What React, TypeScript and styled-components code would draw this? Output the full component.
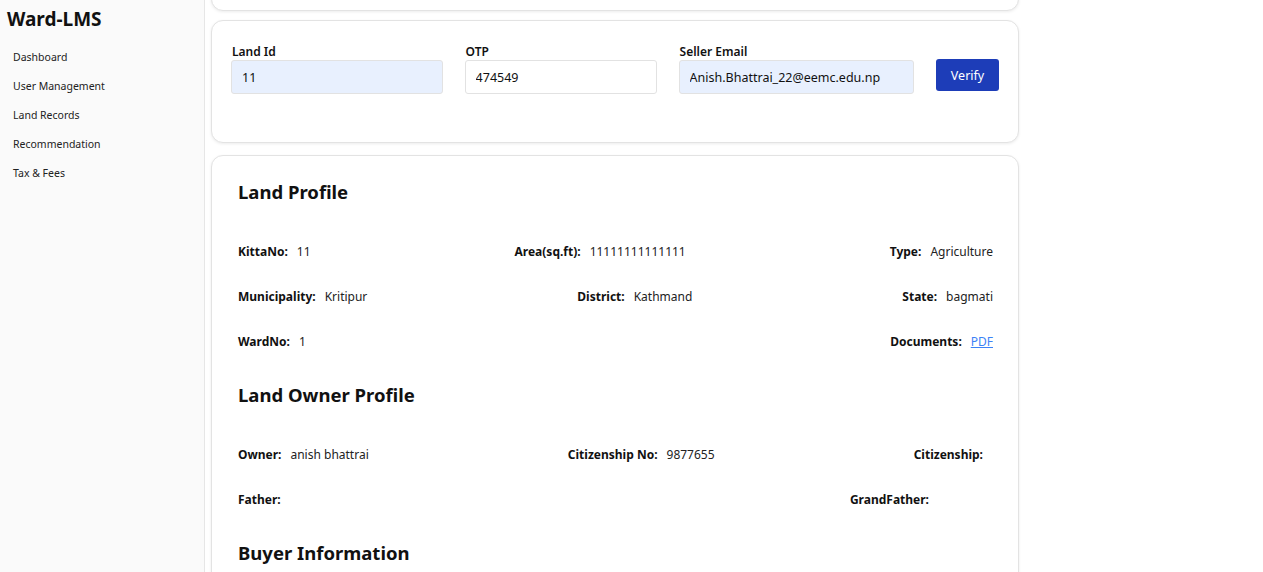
import styled, { createGlobalStyle } from "styled-components"

const GlobalStyle = createGlobalStyle`
  * { box-sizing: border-box; }
  html, body { margin: 0; padding: 0; background: #fff; }
  body {
    font-family: "Noto Sans", "Open Sans", sans-serif;
    color: #111;
    overflow: hidden;
  }
`

type Field = { label: string; value?: string; link?: boolean; pad?: number }

const landRows: Field[][] = [
  [
    { label: "KittaNo:", value: "11" },
    { label: "Area(sq.ft):", value: "11111111111111" },
    { label: "Type:", value: "Agriculture" },
  ],
  [
    { label: "Municipality:", value: "Kritipur" },
    { label: "District:", value: "Kathmand" },
    { label: "State:", value: "bagmati" },
  ],
  [
    { label: "WardNo:", value: "1" },
    { label: "Documents:", value: "PDF", link: true },
  ],
]

const ownerRows: Field[][] = [
  [
    { label: "Owner:", value: "anish bhattrai" },
    { label: "Citizenship No:", value: "9877655" },
    { label: "Citizenship:", pad: 10 },
  ],
  [
    { label: "Father:", pad: 10 },
    { label: "GrandFather:", pad: 64 },
  ],
]

export default function App() {
  return (
    <>
      <GlobalStyle />
      <Layout>
        <Sidebar>
          <Brand>Ward-LMS</Brand>
          <Nav>
            <NavItem>Dashboard</NavItem>
            <NavItem>User Management</NavItem>
            <NavItem>Land Records</NavItem>
            <NavItem>Recommendation</NavItem>
            <NavItem>Tax &amp; Fees</NavItem>
          </Nav>
        </Sidebar>

        <Main>
          <TopCard />

          <VerifyCard>
            <FormRow>
              <FormField $width={212}>
                <FieldLabel>Land Id</FieldLabel>
                <Input $autofill defaultValue="11" />
              </FormField>
              <FormField $width={192}>
                <FieldLabel>OTP</FieldLabel>
                <Input defaultValue="474549" />
              </FormField>
              <FormField $width={236}>
                <FieldLabel>Seller Email</FieldLabel>
                <Input $autofill defaultValue="Anish.Bhattrai_22@eemc.edu.np" />
              </FormField>
              <VerifyButton>Verify</VerifyButton>
            </FormRow>
          </VerifyCard>

          <ProfileCard>
            <Section>
              <SectionTitle>Land Profile</SectionTitle>
              {landRows.map((row, i) => (
                <InfoRow key={i}>
                  {row.map((f) => (
                    <InfoItem key={f.label}>
                      <InfoLabel>{f.label}</InfoLabel>
                      {f.link ? (
                        <DocLink href="#">{f.value}</DocLink>
                      ) : (
                        <InfoValue $pad={f.pad}>{f.value}</InfoValue>
                      )}
                    </InfoItem>
                  ))}
                </InfoRow>
              ))}
            </Section>

            <Section>
              <SectionTitle>Land Owner Profile</SectionTitle>
              {ownerRows.map((row, i) => (
                <InfoRow key={i}>
                  {row.map((f) => (
                    <InfoItem key={f.label}>
                      <InfoLabel>{f.label}</InfoLabel>
                      <InfoValue $pad={f.pad}>{f.value}</InfoValue>
                    </InfoItem>
                  ))}
                </InfoRow>
              ))}
            </Section>

            <Section>
              <SectionTitle>Buyer Information</SectionTitle>
            </Section>
          </ProfileCard>
        </Main>
      </Layout>
    </>
  )
}

const Layout = styled.div`
  display: flex;
  height: 572px;
  overflow: hidden;
`

const Sidebar = styled.aside`
  width: 205px;
  flex-shrink: 0;
  background: #fafafa;
  border-right: 1px solid #e6e6e6;
  padding: 8px 0 0 0;
`

const Brand = styled.h1`
  margin: 0 0 0 7px;
  font-size: 19px;
  line-height: 22px;
  font-weight: 700;
  color: #111;
`

const Nav = styled.nav`
  display: flex;
  flex-direction: column;
  margin-top: 19px;
`

const NavItem = styled.a`
  padding-left: 13px;
  font-size: 10.5px;
  line-height: 17px;
  height: 29px;
  color: #222;
  cursor: pointer;
`

const Main = styled.main`
  width: 820px;
  padding: 0 6px;
  display: flex;
  flex-direction: column;
  gap: 9px;
  margin-top: -31px;
`

const Card = styled.div`
  flex-shrink: 0;
  background: #fff;
  border: 1px solid #e3e3e3;
  border-radius: 12px;
  box-shadow: 0 1px 3px rgba(0, 0, 0, 0.08);
`

const TopCard = styled(Card)`
  height: 42px;
`

const VerifyCard = styled(Card)`
  height: 123px;
  padding: 23px 19px 0 19px;
`

const FormRow = styled.div`
  display: flex;
  align-items: flex-end;
  gap: 22px;
`

const FormField = styled.label<{ $width: number }>`
  display: flex;
  flex-direction: column;
  width: ${(p) => p.$width}px;
`

const FieldLabel = styled.span`
  font-size: 12px;
  font-weight: 600;
  line-height: 16px;
  color: #111;
  margin-left: 1px;
`

const Input = styled.input<{ $autofill?: boolean }>`
  height: 34px;
  padding: 0 10px;
  border: 1px solid #e2e2e2;
  border-radius: 3px;
  background: ${(p) => (p.$autofill ? "#e8f0fe" : "#fff")};
  font-family: inherit;
  font-size: 12.5px;
  color: #111;
  outline: none;
`

const VerifyButton = styled.button`
  width: 63px;
  height: 32px;
  margin-bottom: 3px;
  border: none;
  border-radius: 3px;
  background: #1d3db8;
  color: #fff;
  font-family: inherit;
  font-size: 12.5px;
  cursor: pointer;
`

const ProfileCard = styled(Card)`
  margin-top: 3px;
  padding: 23px 25px 40px 26px;
`

const Section = styled.section`
  display: flex;
  flex-direction: column;

  &:not(:first-child) {
    margin-top: 4px;
  }
`

const SectionTitle = styled.h2`
  margin: 0 0 38px;
  font-size: 18.5px;
  line-height: 26px;
  font-weight: 700;
  color: #111;
`

const InfoRow = styled.div`
  display: flex;
  justify-content: space-between;
  align-items: center;
  height: 18px;
  margin-bottom: 27px;
`

const InfoItem = styled.div`
  display: flex;
  align-items: center;
  gap: 9px;
  font-size: 12px;
  line-height: 18px;
`

const InfoLabel = styled.span`
  font-weight: 700;
  color: #111;
`

const InfoValue = styled.span<{ $pad?: number }>`
  color: #222;
  min-width: ${(p) => (p.$pad ? p.$pad - 9 : 0)}px;
`

const DocLink = styled.a`
  color: #3b82f6;
  text-decoration: underline;
`
